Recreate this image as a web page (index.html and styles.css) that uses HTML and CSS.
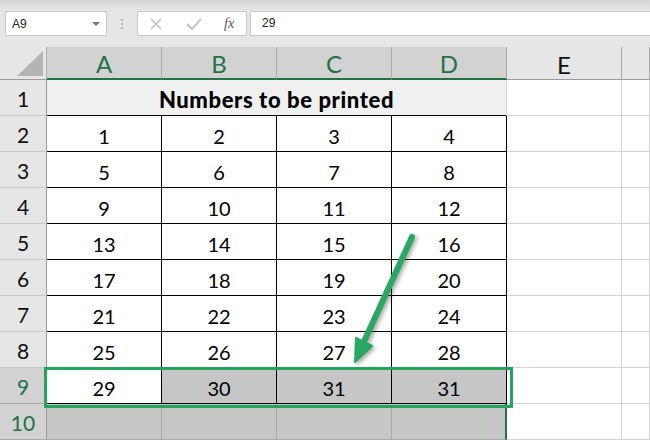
FILE: index.html
```html
<!DOCTYPE html>
<html lang="en">
<head>
    <meta charset="UTF-8">
    <title>Numbers to be printed</title>
    <link rel="stylesheet" href="styles.css">
</head>
<body>
    <div class="toolbar">
        <div class="name-box">
            <span>A9</span>
            <span class="caret"></span>
        </div>
        <div class="grip">
            <span></span><span></span><span></span>
        </div>
        <div class="fx-buttons">
            <svg width="12" height="12" viewBox="0 0 12 12"><path d="M1 1 L11 11 M11 1 L1 11" stroke="#bdbdbd" stroke-width="1.4" fill="none"/></svg>
            <svg width="16" height="12" viewBox="0 0 16 12"><path d="M1 6 L6 11 L15 1" stroke="#bdbdbd" stroke-width="1.8" fill="none"/></svg>
            <span class="fx">fx</span>
        </div>
        <div class="formula">29</div>
    </div>

    <div class="sheet">
        <div class="corner"><span class="tri"></span></div>
        <div class="col-head sel">A</div>
        <div class="col-head sel">B</div>
        <div class="col-head sel">C</div>
        <div class="col-head sel">D</div>
        <div class="col-head">E</div>
        <div class="col-head"></div>

        <div class="row-head">1</div>
        <div class="cell title">Numbers to be printed</div>
        <div class="cell"></div><div class="cell"></div>

        <div class="row-head">2</div>
        <div class="cell num">1</div><div class="cell num">2</div><div class="cell num">3</div><div class="cell num">4</div>
        <div class="cell"></div><div class="cell"></div>

        <div class="row-head">3</div>
        <div class="cell num">5</div><div class="cell num">6</div><div class="cell num">7</div><div class="cell num">8</div>
        <div class="cell"></div><div class="cell"></div>

        <div class="row-head">4</div>
        <div class="cell num">9</div><div class="cell num">10</div><div class="cell num">11</div><div class="cell num">12</div>
        <div class="cell"></div><div class="cell"></div>

        <div class="row-head">5</div>
        <div class="cell num">13</div><div class="cell num">14</div><div class="cell num">15</div><div class="cell num">16</div>
        <div class="cell"></div><div class="cell"></div>

        <div class="row-head">6</div>
        <div class="cell num">17</div><div class="cell num">18</div><div class="cell num">19</div><div class="cell num">20</div>
        <div class="cell"></div><div class="cell"></div>

        <div class="row-head">7</div>
        <div class="cell num">21</div><div class="cell num">22</div><div class="cell num">23</div><div class="cell num">24</div>
        <div class="cell"></div><div class="cell"></div>

        <div class="row-head">8</div>
        <div class="cell num">25</div><div class="cell num">26</div><div class="cell num">27</div><div class="cell num">28</div>
        <div class="cell"></div><div class="cell"></div>

        <div class="row-head sel">9</div>
        <div class="cell num">29</div><div class="cell num grey">30</div><div class="cell num grey">31</div><div class="cell num grey">31</div>
        <div class="cell"></div><div class="cell"></div>

        <div class="row-head sel">10</div>
        <div class="cell grey"></div><div class="cell grey"></div><div class="cell grey"></div><div class="cell grey last"></div>
        <div class="cell"></div><div class="cell"></div>
    </div>

    <div class="active-box"></div>

    <svg class="arrow" width="650" height="440" viewBox="0 0 650 440">
        <line x1="412" y1="237" x2="362" y2="346" stroke="#2aa862" stroke-width="6" stroke-linecap="round"/>
        <polygon points="355,362 356,338 372,346" fill="#2aa862" stroke="#2aa862" stroke-width="2" stroke-linejoin="round"/>
    </svg>
</body>
</html>
```

FILE: styles.css
```css
body {
    margin: 0;
    width: 650px;
    height: 440px;
    overflow: hidden;
    position: relative;
    font-family: 'Lato', sans-serif;
    background-color: #fff;
}
.toolbar {
    height: 47px;
    box-sizing: border-box;
    padding-top: 11px;
    display: flex;
    align-items: flex-start;
    background: linear-gradient(#d4d4d4 0, #e6e6e6 10px, #e6e6e6 100%);
    font-family: 'Liberation Sans', sans-serif;
    font-size: 12px;
    color: #222;
}
.name-box {
    margin-left: 5px;
    width: 102px;
    height: 25px;
    box-sizing: border-box;
    background-color: #fff;
    border: 1px solid #c8c8c8;
    display: flex;
    align-items: center;
    justify-content: space-between;
    padding: 0 6px 0 6px;
}
.caret {
    width: 0;
    height: 0;
    border-left: 4px solid transparent;
    border-right: 4px solid transparent;
    border-top: 4px solid #777;
}
.grip {
    width: 30px;
    height: 25px;
    display: flex;
    flex-direction: column;
    align-items: center;
    justify-content: center;
    gap: 2px;
}
.grip span {
    width: 2px;
    height: 2px;
    background-color: #b0b0b0;
}
.fx-buttons {
    width: 110px;
    height: 25px;
    box-sizing: border-box;
    background-color: #fff;
    border: 1px solid #c8c8c8;
    display: flex;
    align-items: center;
    padding-left: 12px;
    gap: 24px;
}
.fx {
    font-family: 'Liberation Serif', serif;
    font-style: italic;
    font-size: 14px;
    color: #555;
    margin-left: -2px;
}
.formula {
    margin-left: 3px;
    flex: 1;
    height: 25px;
    box-sizing: border-box;
    background-color: #fff;
    border: 1px solid #c8c8c8;
    border-right: none;
    padding-left: 11px;
    line-height: 23px;
}
.sheet {
    display: grid;
    grid-template-columns: 47px repeat(5, 115px) 1fr;
    grid-template-rows: 33px repeat(10, 36px);
}
.sheet > div {
    box-sizing: border-box;
}
.corner {
    background-color: #e6e6e6;
    border-right: 1px solid #ababab;
    border-bottom: 1px solid #9b9b9b;
    position: relative;
}
.tri {
    position: absolute;
    right: 3px;
    bottom: 3px;
    width: 0;
    height: 0;
    border-left: 26px solid transparent;
    border-bottom: 25px solid #b4b4b4;
}
.col-head {
    background-color: #e6e6e6;
    border-right: 1px solid #ababab;
    border-bottom: 1px solid #9b9b9b;
    font-size: 24px;
    color: #111;
    display: flex;
    align-items: center;
    justify-content: center;
    padding-top: 2px;
}
.col-head.sel {
    background-color: #d2d2d2;
    color: #217346;
    border-bottom: 2px solid #217346;
}
.row-head {
    background-color: #e6e6e6;
    border-right: 1px solid #9b9b9b;
    border-bottom: 1px solid #c8c8c8;
    font-size: 21px;
    color: #111;
    display: flex;
    align-items: center;
    justify-content: center;
    padding-top: 2px;
}
.row-head.sel {
    background-color: #d2d2d2;
    color: #217346;
    border-bottom-color: #ababab;
}
.cell {
    border-right: 1px solid #d4d4d4;
    border-bottom: 1px solid #d4d4d4;
    font-size: 20px;
    color: #000;
    display: flex;
    align-items: center;
    justify-content: center;
    padding-top: 5px;
}
.cell.title {
    grid-column: span 4;
    background-color: #f0f0f0;
    border-bottom: 1px solid #000;
    font-weight: 900;
    font-size: 22px;
    letter-spacing: 0.6px;
    padding-top: 4px;
}
.cell.num {
    border-right: 1px solid #000;
    border-bottom: 1px solid #000;
}
.cell.grey {
    background-color: #c6c6c6;
    border-right-color: #a8a8a8;
    border-bottom-color: #a8a8a8;
}
.cell.num.grey {
    border-right-color: #000;
    border-bottom-color: #000;
}
.cell.last {
    border-right: 2px solid #217346;
}
.active-box {
    position: absolute;
    left: 44px;
    top: 367px;
    width: 469px;
    height: 41px;
    box-sizing: border-box;
    border: 3px solid #23a55f;
}
.arrow {
    position: absolute;
    left: 0;
    top: 0;
    filter: drop-shadow(2px 2px 2px rgba(0, 0, 0, 0.35));
}
```
